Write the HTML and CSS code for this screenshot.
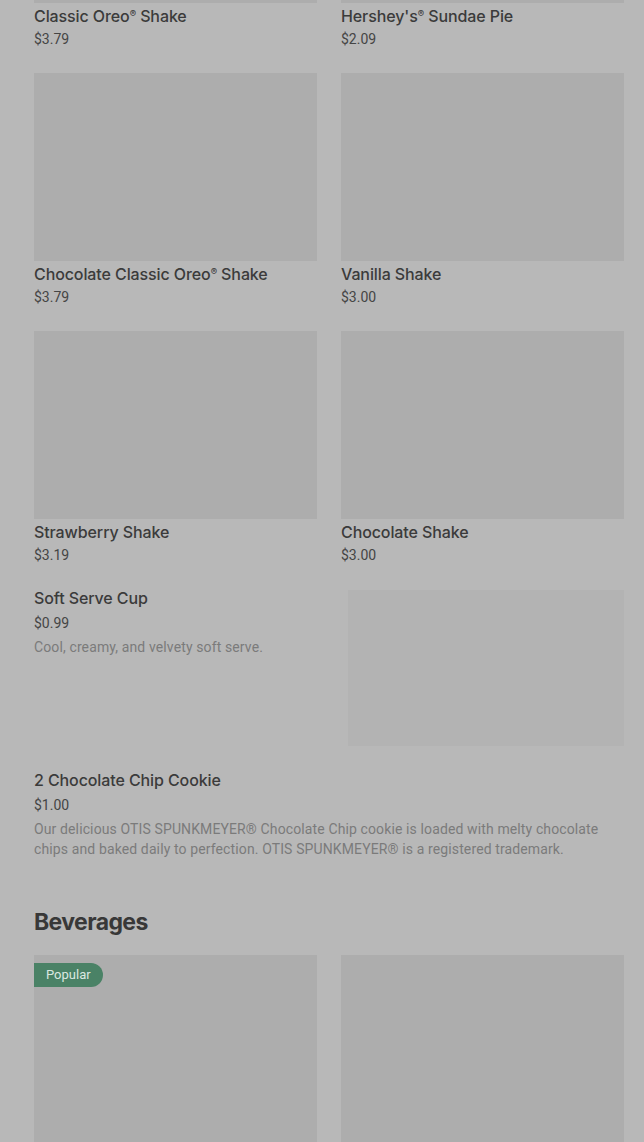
FILE: index.html
```html
<!DOCTYPE html>
<html lang="en">
<head>
    <meta charset="UTF-8">
    <meta name="viewport" content="width=device-width, initial-scale=1.0">
    <title>Menu</title>
    <link rel="stylesheet" href="styles.css">
</head>
<body>
    <div class="menu">
        <!-- Desserts grid -->
        <div class="grid first">
            <div class="card">
                <div class="photo"></div>
                <div class="name">Classic Oreo<span class="reg">®</span> Shake</div>
                <div class="price">$3.79</div>
            </div>
            <div class="card">
                <div class="photo"></div>
                <div class="name">Hershey's<span class="reg">®</span> Sundae Pie</div>
                <div class="price">$2.09</div>
            </div>
            <div class="card">
                <div class="photo"></div>
                <div class="name">Chocolate Classic Oreo<span class="reg">®</span> Shake</div>
                <div class="price">$3.79</div>
            </div>
            <div class="card">
                <div class="photo"></div>
                <div class="name">Vanilla Shake</div>
                <div class="price">$3.00</div>
            </div>
            <div class="card">
                <div class="photo"></div>
                <div class="name">Strawberry Shake</div>
                <div class="price">$3.19</div>
            </div>
            <div class="card">
                <div class="photo"></div>
                <div class="name">Chocolate Shake</div>
                <div class="price">$3.00</div>
            </div>
        </div>

        <!-- List items -->
        <div class="row soft">
            <div class="info">
                <div class="name">Soft Serve Cup</div>
                <div class="price">$0.99</div>
                <div class="desc">Cool, creamy, and velvety soft serve.</div>
            </div>
            <div class="thumb"></div>
        </div>

        <div class="row">
            <div class="info">
                <div class="name">2 Chocolate Chip Cookie</div>
                <div class="price">$1.00</div>
                <div class="desc">Our delicious OTIS SPUNKMEYER® Chocolate Chip cookie is loaded with melty chocolate chips and baked daily to perfection. OTIS SPUNKMEYER® is a registered trademark.</div>
            </div>
        </div>

        <h2 class="section-title">Beverages</h2>
        <div class="grid">
            <div class="card">
                <div class="photo">
                    <span class="badge">Popular</span>
                </div>
            </div>
            <div class="card">
                <div class="photo"></div>
            </div>
        </div>
    </div>
</body>
</html>
```

FILE: styles.css
```css
body {
    margin: 0;
    background-color: #b8b8b8;
    font-family: Roboto, "Liberation Sans", sans-serif;
    color: #3b3b3b;
    overflow: hidden;
}
.menu {
    padding: 0 20px 0 34px;
}
.grid {
    display: grid;
    grid-template-columns: 283px 283px;
    column-gap: 24px;
    row-gap: 24px;
}
/* list is scrolled, only the bottom of the first photos shows */
.grid.first {
    margin-top: -185px;
}
.photo {
    position: relative;
    height: 188px;
    background-color: #adadad;
}
.name {
    font-family: Inter, Roboto, sans-serif;
    font-size: 16px;
    font-weight: 500;
    line-height: 24px;
    letter-spacing: -0.1px;
    color: #3b3b3b;
}
.reg {
    font-size: 0.6em;
    vertical-align: 0.5em;
    line-height: 0;
}
.price {
    font-size: 14px;
    line-height: 20px;
    color: #454545;
}
.card .name {
    margin-top: 1px;
}
.card .price {
    margin-top: 1px;
}
.row {
    display: flex;
    justify-content: space-between;
    margin-top: 22px;
}
.row.soft {
    margin-top: 21px;
}
.row .info {
    flex: 1;
}
.row .price {
    margin-top: 1px;
    line-height: 24px;
}
.desc {
    margin-top: 2px;
    font-size: 14px;
    line-height: 20px;
    letter-spacing: 0.12px;
    color: #7b7b7b;
}
.thumb {
    width: 276px;
    height: 156px;
    margin-top: 4px;
    background-color: #b3b3b3;
    flex-shrink: 0;
}
.section-title {
    margin: 47px 0 17px;
    font-family: Inter, Roboto, sans-serif;
    font-size: 23px;
    font-weight: 700;
    line-height: 32px;
    letter-spacing: -0.6px;
    color: #383838;
}
.badge {
    position: absolute;
    top: 8px;
    left: 0;
    height: 24px;
    padding: 0 12px;
    border-radius: 0 12px 12px 0;
    background-color: #4a8266;
    color: #dbe8e0;
    font-size: 13px;
    line-height: 24px;
}
```
